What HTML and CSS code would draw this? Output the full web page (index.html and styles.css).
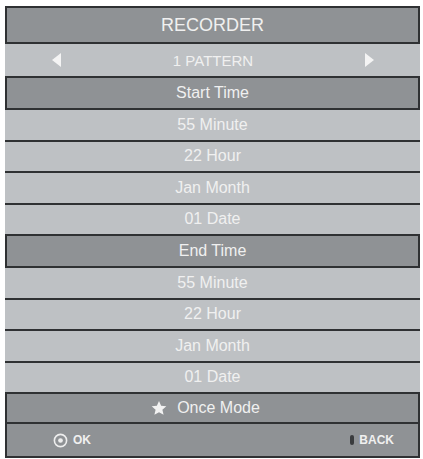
FILE: index.html
```html
<!DOCTYPE html>
<html lang="en">
<head>
  <meta charset="UTF-8">
  <meta name="viewport" content="width=device-width, initial-scale=1.0">
  <title>Recorder</title>
  <link rel="stylesheet" href="styles.css">
</head>
<body>
  <div class="menu">
    <div class="title">RECORDER</div>

    <div class="pattern">
      <span class="arrow arrow-left"></span>
      <span>1 PATTERN</span>
      <span class="arrow arrow-right"></span>
    </div>

    <div class="section">Start Time</div>
    <div class="items">
      <div class="item">55 Minute</div>
      <div class="item">22 Hour</div>
      <div class="item">Jan Month</div>
      <div class="item">01 Date</div>
    </div>

    <div class="section">End Time</div>
    <div class="items">
      <div class="item">55 Minute</div>
      <div class="item">22 Hour</div>
      <div class="item">Jan Month</div>
      <div class="item">01 Date</div>
    </div>

    <div class="section mode">
      <svg class="star" viewBox="0 0 24 24" width="16" height="16">
        <path d="M12 1.5l3.2 7.2 7.8.7-5.9 5.2 1.8 7.7L12 18.3l-6.9 4 1.8-7.7L1 9.4l7.8-.7z" fill="#f2f2f2"/>
      </svg>
      <span>Once Mode</span>
    </div>

    <div class="footer">
      <div class="hint">
        <svg viewBox="0 0 14 14" width="15" height="15">
          <circle cx="7" cy="7" r="5.7" fill="none" stroke="#eeeeee" stroke-width="1.5"/>
          <circle cx="7" cy="7" r="2.2" fill="#eeeeee"/>
        </svg>
        <span>OK</span>
      </div>
      <div class="hint">
        <span class="back-key"></span>
        <span>BACK</span>
      </div>
    </div>
  </div>
</body>
</html>
```

FILE: styles.css
```css
body {
  margin: 0;
  background-color: #fff;
  font-family: "Liberation Sans", Arial, sans-serif;
  color: #f0f0f0;
}

.menu {
  width: 415px;
  margin: 6px 0 0 5px;
  display: flex;
  flex-direction: column;
}

.title,
.section,
.footer {
  background-color: #8f9295;
  border: 2px solid #2f3133;
  box-sizing: border-box;
  display: flex;
  align-items: center;
  justify-content: center;
}

.title {
  height: 38px;
  font-size: 18px;
}

.pattern {
  height: 32px;
  background-color: #bec1c4;
  display: flex;
  align-items: center;
  justify-content: space-between;
  padding: 0 46px 0 47px;
  font-size: 15px;
}

.arrow {
  width: 0;
  height: 0;
  border-top: 7px solid transparent;
  border-bottom: 7px solid transparent;
}

.arrow-left {
  border-right: 9px solid #f4f4f4;
}

.arrow-right {
  border-left: 9px solid #f4f4f4;
}

.section {
  height: 34px;
  font-size: 16px;
}

.items {
  display: flex;
  flex-direction: column;
}

.item {
  height: 29.5px;
  background-color: #bec1c4;
  display: flex;
  align-items: center;
  justify-content: center;
  font-size: 16px;
  border-bottom: 2px solid #2f3133;
}

.item:last-child {
  border-bottom: none;
}

.mode {
  height: 32px;
  gap: 10px;
  padding-right: 14px;
}

.footer {
  height: 34px;
  border-top: none;
  justify-content: space-between;
  padding: 0 24px 0 46px;
}

.hint {
  display: flex;
  align-items: center;
  gap: 5px;
  font-size: 12px;
  font-weight: bold;
}

.back-key {
  width: 4px;
  height: 10px;
  border-radius: 2px;
  background-color: #3a3c3e;
}
```
